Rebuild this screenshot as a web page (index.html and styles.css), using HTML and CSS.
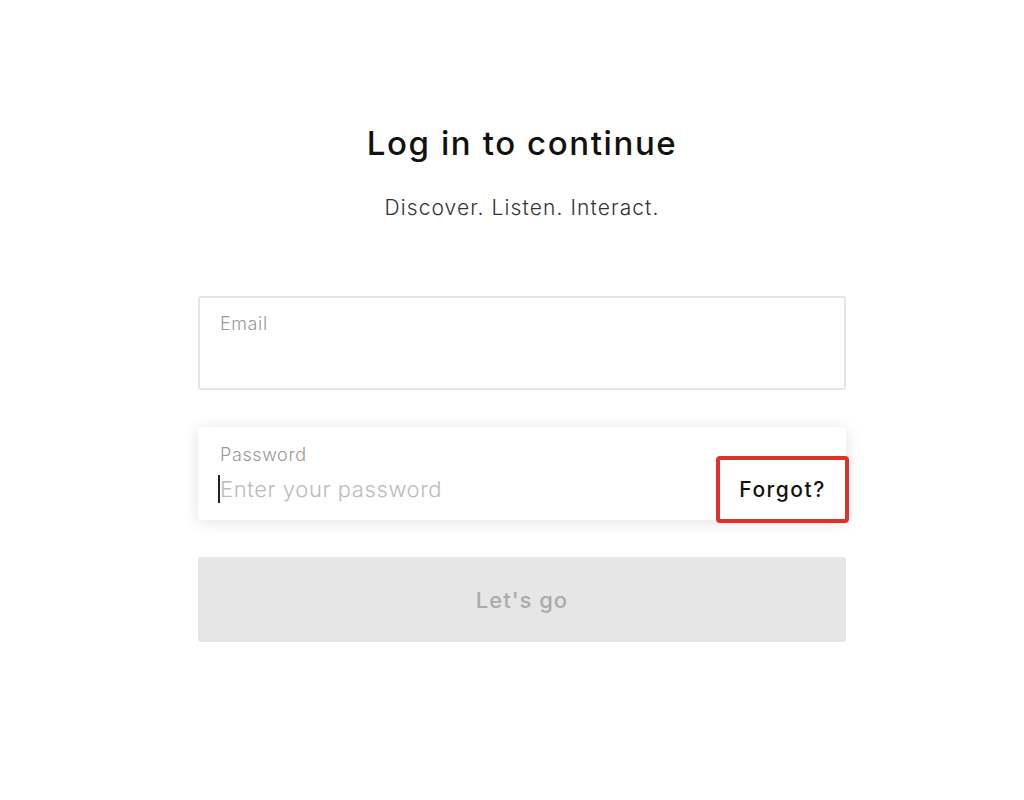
FILE: index.html
```html
<!DOCTYPE html>
<html lang="en">
<head>
    <meta charset="UTF-8">
    <meta name="viewport" content="width=device-width, initial-scale=1.0">
    <title>Log in</title>
    <link rel="stylesheet" href="styles.css">
</head>
<body>
    <div class="container">
        <h1 class="title">Log in to continue</h1>
        <p class="subtitle">Discover. Listen. Interact.</p>

        <form class="login-form" action="/login" method="POST">
            <div class="field">
                <label for="email">Email</label>
                <input type="email" id="email" name="email">
            </div>

            <div class="field field-focus">
                <div class="field-main">
                    <label for="password">Password</label>
                    <div class="input-wrap">
                        <span class="caret"></span>
                        <input type="password" id="password" name="password" placeholder="Enter your password">
                    </div>
                </div>
                <a href="#" class="forgot">Forgot?</a>
            </div>

            <button type="submit" class="submit" disabled>Let's go</button>
        </form>
    </div>
</body>
</html>
```

FILE: styles.css
```css
body {
    font-family: Inter, "Open Sans", sans-serif;
    margin: 0;
    padding: 0;
    background: #ffffff;
    color: #111;
}
.container {
    width: 648px;
    margin: 0 0 0 198px;
    padding-top: 122px;
}
.title {
    margin: 0;
    text-align: center;
    font-size: 33px;
    font-weight: 500;
    line-height: 42px;
    letter-spacing: 1.6px;
    color: #111;
}
.subtitle {
    margin: 30px 0 0;
    text-align: center;
    font-size: 21px;
    font-weight: 300;
    line-height: 28px;
    letter-spacing: 1.1px;
    color: #333;
}
.login-form {
    margin-top: 74px;
}
.field {
    display: flex;
    align-items: center;
    height: 94px;
    box-sizing: border-box;
    border: 2px solid #e6e6e6;
    border-radius: 3px;
    padding: 0 20px;
    margin-bottom: 37px;
    background: white;
}
.field label {
    display: block;
    position: relative;
    top: -20px;
    font-size: 18px;
    font-weight: 300;
    letter-spacing: 0.6px;
    color: #999;
}
.field input {
    display: none;
}
.field-focus {
    height: 93px;
    border: none;
    padding: 0 0 0 20px;
    box-shadow: 0 2px 16px rgba(0, 0, 0, 0.12);
}
.field-focus label {
    top: 0;
    margin-bottom: 10px;
    padding-left: 2px;
}
.field-main {
    flex: 1;
}
.input-wrap {
    display: flex;
    align-items: center;
    height: 28px;
}
.caret {
    width: 2px;
    height: 28px;
    background: #222;
}
.field-focus input {
    display: block;
    flex: 1;
    border: none;
    outline: none;
    padding: 0;
    font-family: inherit;
    font-size: 22px;
    font-weight: 300;
    letter-spacing: 0.6px;
    background: transparent;
}
.field-focus input::placeholder {
    color: #bbb;
}
.forgot {
    display: flex;
    align-items: center;
    justify-content: center;
    align-self: flex-end;
    width: 133px;
    height: 67px;
    box-sizing: border-box;
    margin-right: -3px;
    margin-bottom: -3px;
    border: 4px solid #e0302a;
    border-radius: 4px;
    background: white;
    color: #111;
    font-size: 21px;
    font-weight: 500;
    letter-spacing: 1.5px;
    text-decoration: none;
}
.submit {
    width: 100%;
    height: 85px;
    border: none;
    border-radius: 3px;
    background: #e6e6e6;
    color: #aaaaaa;
    font-family: inherit;
    font-size: 22px;
    font-weight: 500;
    letter-spacing: 1px;
    cursor: pointer;
}
```
